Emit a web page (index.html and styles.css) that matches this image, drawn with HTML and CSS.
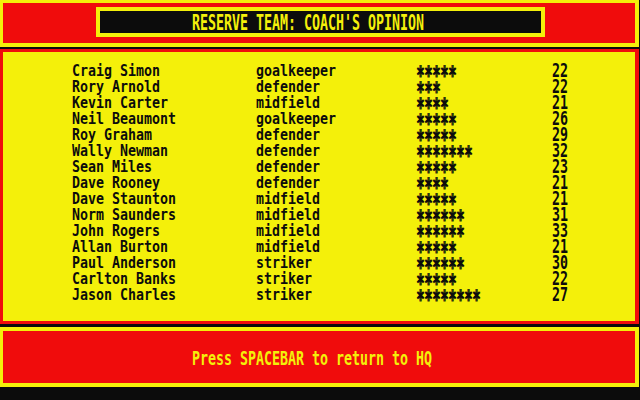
FILE: index.html
```html
<!DOCTYPE html>
<html>
<head>
<meta charset="utf-8">
<link rel="stylesheet" href="styles.css">
</head>
<body>
<div class="screen">
  <header class="panel top">
    <div class="titlebox"><span class="title">RESERVE TEAM: COACH'S OPINION</span></div>
  </header>
  <main class="panel list">
    <div class="row"><span class="name">Craig Simon</span><span class="pos">goalkeeper</span><span class="stars">*****</span><span class="age">22</span></div>
    <div class="row"><span class="name">Rory Arnold</span><span class="pos">defender</span><span class="stars">***</span><span class="age">22</span></div>
    <div class="row"><span class="name">Kevin Carter</span><span class="pos">midfield</span><span class="stars">****</span><span class="age">21</span></div>
    <div class="row"><span class="name">Neil Beaumont</span><span class="pos">goalkeeper</span><span class="stars">*****</span><span class="age">26</span></div>
    <div class="row"><span class="name">Roy Graham</span><span class="pos">defender</span><span class="stars">*****</span><span class="age">29</span></div>
    <div class="row"><span class="name">Wally Newman</span><span class="pos">defender</span><span class="stars">*******</span><span class="age">32</span></div>
    <div class="row"><span class="name">Sean Miles</span><span class="pos">defender</span><span class="stars">*****</span><span class="age">23</span></div>
    <div class="row"><span class="name">Dave Rooney</span><span class="pos">defender</span><span class="stars">****</span><span class="age">21</span></div>
    <div class="row"><span class="name">Dave Staunton</span><span class="pos">midfield</span><span class="stars">*****</span><span class="age">21</span></div>
    <div class="row"><span class="name">Norm Saunders</span><span class="pos">midfield</span><span class="stars">******</span><span class="age">31</span></div>
    <div class="row"><span class="name">John Rogers</span><span class="pos">midfield</span><span class="stars">******</span><span class="age">33</span></div>
    <div class="row"><span class="name">Allan Burton</span><span class="pos">midfield</span><span class="stars">*****</span><span class="age">21</span></div>
    <div class="row"><span class="name">Paul Anderson</span><span class="pos">striker</span><span class="stars">******</span><span class="age">30</span></div>
    <div class="row"><span class="name">Carlton Banks</span><span class="pos">striker</span><span class="stars">*****</span><span class="age">22</span></div>
    <div class="row"><span class="name">Jason Charles</span><span class="pos">striker</span><span class="stars">********</span><span class="age">27</span></div>
  </main>
  <footer class="panel foot"><span class="msg">Press SPACEBAR to return to HQ</span></footer>
</div>
</body>
</html>
```
FILE: styles.css
```css
* { box-sizing: border-box; }
html, body {
  margin: 0;
  padding: 0;
  background: #0c0c0c;
}
.screen {
  width: 640px;
  height: 400px;
  display: flex;
  flex-direction: column;
  font-family: "DejaVu Sans Mono", "Liberation Mono", monospace;
  font-size: 13.29px;
}
.panel {
  width: 639px;
  flex: none;
}
.top {
  height: 47px;
  background: #f00c0c;
  border-style: solid;
  border-color: #f4f00a;
  border-width: 3px 4px 4px 3px;
  padding: 4px 0 0 93px;
}
.titlebox {
  width: 449px;
  height: 30px;
  border: 4px solid #f4f00a;
  background: #0c0c0c;
  padding-left: 92px;
  line-height: 22px;
  color: #f4f00a;
}
.title {
  display: inline-block;
  white-space: pre;
  font-weight: bold;
  transform: translateY(1.5px) scaleY(1.55);
}
.list {
  margin-top: 2px;
  height: 275px;
  background: #f4f00a;
  border-style: solid;
  border-color: #f00c0c;
  border-width: 3px 4px 3px 3px;
  padding: 11px 0 0 69px;
  color: #0c0c0c;
}
.row {
  display: grid;
  grid-template-columns: 184px 160px 136px 24px;
  height: 16px;
  line-height: 16px;
}
.name, .pos {
  font-weight: bold;
  white-space: pre;
  transform: scaleY(1.2);
}
.stars {
  font-weight: bold;
  white-space: pre;
  text-shadow: 1px 0 0 #0c0c0c;
  transform: translateY(6px) scaleY(2);
}
.age {
  white-space: pre;
  font-weight: bold;
  transform: scaleY(1.45);
}
.foot {
  margin-top: 3px;
  height: 60px;
  background: #f00c0c;
  border-style: solid;
  border-color: #f4f00a;
  border-width: 4px 4px 4px 3px;
  padding-left: 189px;
  line-height: 52px;
  color: #f4f00a;
}
.msg {
  display: inline-block;
  white-space: pre;
  font-weight: bold;
  transform: translateY(2.4px) scaleY(1.45);
}
```
